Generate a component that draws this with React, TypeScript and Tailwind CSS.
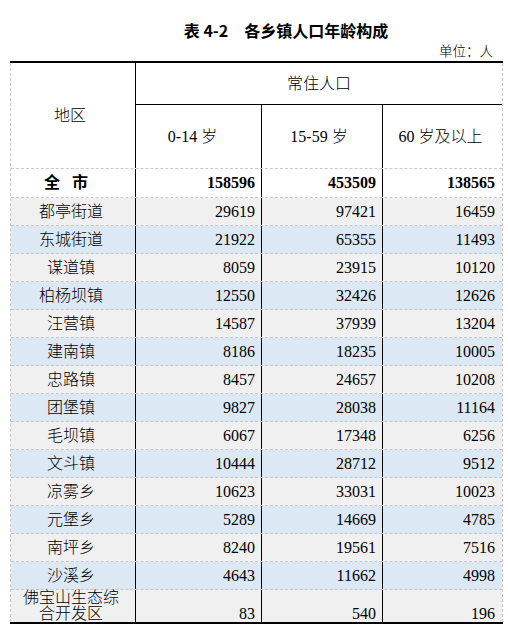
const rows: [string, number, number, number][] = [
  ["都亭街道", 29619, 97421, 16459],
  ["东城街道", 21922, 65355, 11493],
  ["谋道镇", 8059, 23915, 10120],
  ["柏杨坝镇", 12550, 32426, 12626],
  ["汪营镇", 14587, 37939, 13204],
  ["建南镇", 8186, 18235, 10005],
  ["忠路镇", 8457, 24657, 10208],
  ["团堡镇", 9827, 28038, 11164],
  ["毛坝镇", 6067, 17348, 6256],
  ["文斗镇", 10444, 28712, 9512],
  ["凉雾乡", 10623, 33031, 10023],
  ["元堡乡", 5289, 14669, 4785],
  ["南坪乡", 8240, 19561, 7516],
  ["沙溪乡", 4643, 11662, 4998],
];

const font = { fontFamily: '"Liberation Serif", "Noto Sans CJK SC", serif' };

const App = () => {
  return (
    <div className="w-[508px] h-[637px] bg-white text-black" style={font}>
      {/* Title */}
      <div
        className="pt-[20px] pl-[64px] h-[40px] text-center text-[16px] leading-[20px] font-bold"
        style={{ fontFamily: '"Noto Sans CJK SC", sans-serif' }}
      >
        表 4-2　各乡镇人口年龄构成
      </div>
      <div
        className="mt-[2px] h-[16px] pr-[15px] text-right text-[13.5px] leading-[16px] font-light"
        style={{ fontFamily: '"Noto Sans CJK SC", sans-serif' }}
      >
        单位：人
      </div>

      <div className="mt-[3px] ml-[10px] w-[493px] border-t-2 border-b-2 border-black">
        <div className="border-x border-dashed border-[#c8c8c8] text-[16px] font-light">
          {/* Header */}
          <div className="flex border-b border-dashed border-[#c8c8c8]">
            <div className="w-[125px] h-[105px] border-r border-black flex items-center justify-center pr-[6px]">
              地区
            </div>
            <div className="flex-1 flex flex-col">
              <div className="h-[42px] border-b border-black flex items-center justify-center">
                常住人口
              </div>
              <div className="h-[63px] grid grid-cols-[126px_121px_119px]">
                <div className="border-r border-black flex items-center justify-center pr-[12px] whitespace-pre">0-14 岁</div>
                <div className="border-r border-black flex items-center justify-center pr-[6px] whitespace-pre">15-59 岁</div>
                <div className="flex items-center justify-center pr-[4px] whitespace-pre">60 岁及以上</div>
              </div>
            </div>
          </div>

          {/* 全市 */}
          <div className="h-[29px] grid grid-cols-[125px_126px_121px_119px] border-b border-dashed border-[#c8c8c8] font-bold">
            <div className="border-r border-black flex items-center justify-center gap-[12px] pr-[14px]">
              <span>全</span>
              <span>市</span>
            </div>
            <div className="border-r border-black flex items-center justify-end pr-[6px]">158596</div>
            <div className="border-r border-black flex items-center justify-end pr-[6px]">453509</div>
            <div className="flex items-center justify-end pr-[7px]">138565</div>
          </div>

          {/* Data rows */}
          {rows.map(([name, a, b, c], i) => (
            <div
              key={name}
              className={`h-[28px] grid grid-cols-[125px_126px_121px_119px] border-b border-dashed border-[#c8c8c8] ${
                i % 2 === 0 ? "bg-[#f0f0f0]" : "bg-[#dde8f5]"
              }`}
            >
              <div className="border-r border-black flex items-center justify-center pr-[4px]">{name}</div>
              <div className="border-r border-black flex items-center justify-end pr-[6px]">{a}</div>
              <div className="border-r border-black flex items-center justify-end pr-[6px]">{b}</div>
              <div className="flex items-center justify-end pr-[7px]">{c}</div>
            </div>
          ))}

          {/* Last row */}
          <div className="h-[32px] grid grid-cols-[125px_126px_121px_119px] bg-[#f0f0f0] leading-[16px]">
            <div className="border-r border-black text-center pr-[4px]">
              佛宝山生态综
              <br />
              合开发区
            </div>
            <div className="border-r border-black flex items-end justify-end pr-[6px]">83</div>
            <div className="border-r border-black flex items-end justify-end pr-[6px]">540</div>
            <div className="flex items-end justify-end pr-[7px]">196</div>
          </div>
        </div>
      </div>
    </div>
  );
};

export default App;
